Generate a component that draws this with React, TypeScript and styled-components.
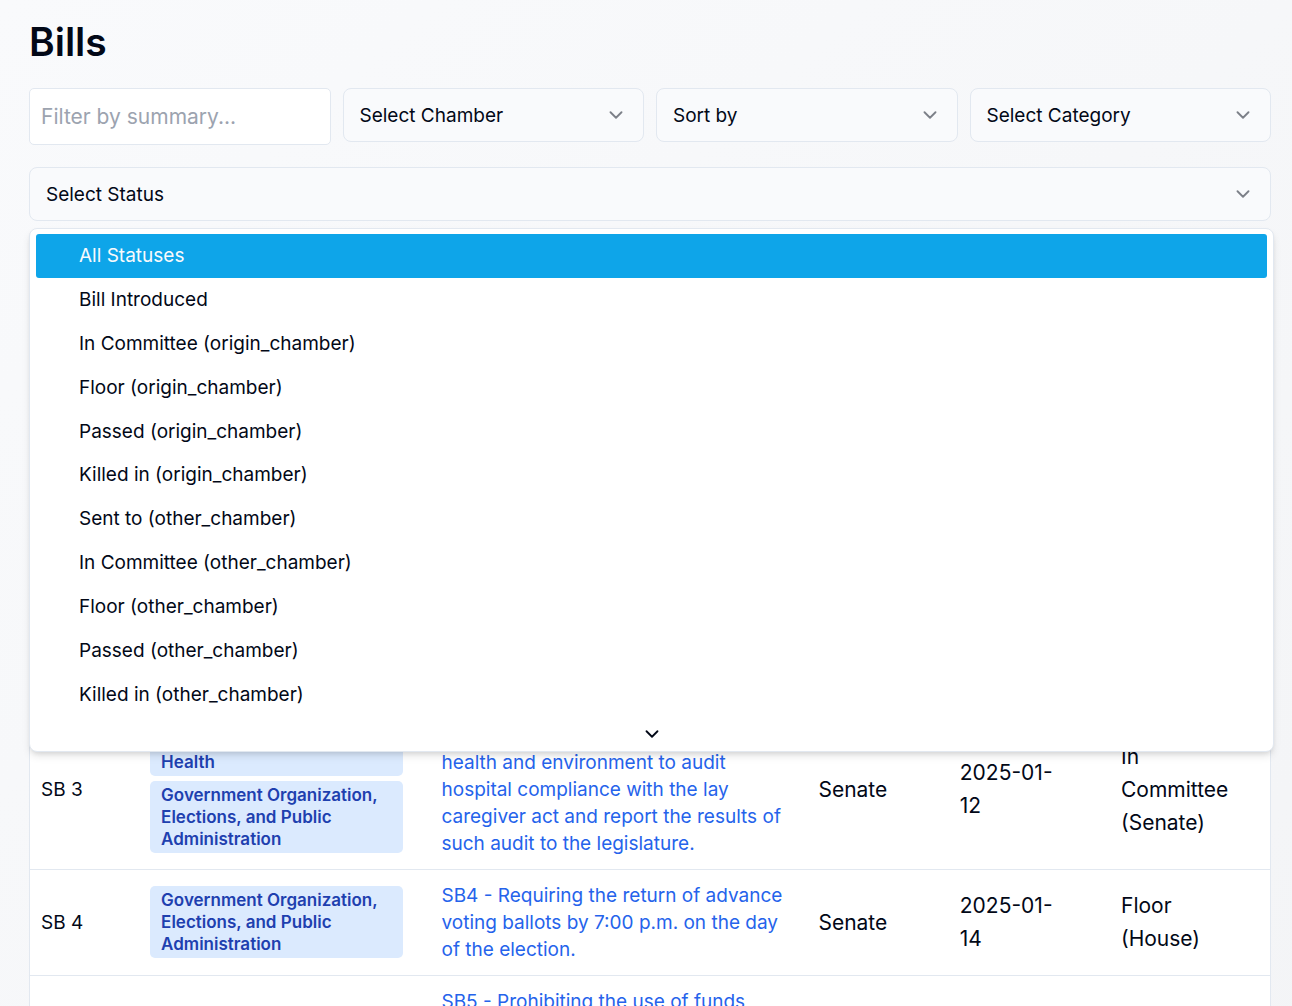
import React, { useState } from "react";
import styled, { createGlobalStyle } from "styled-components";
import { ChevronDown } from "lucide-react";

const GlobalStyle = createGlobalStyle`
  *, *::before, *::after { box-sizing: border-box; }
  html { scrollbar-width: none; }
  body {
    margin: 0;
    color: #020817;
    font-family: Inter, "Liberation Sans", sans-serif;
    font-size: 21px;
    line-height: 33px;
  }
`;

const Page = styled.main`
  min-height: 100vh;
  padding: 17px 21px 22px 29px;
  background: linear-gradient(to bottom right, #f9fafc, #f3f4f6);
`;

const Title = styled.h1`
  margin: 0 0 22px;
  font-size: 39px;
  line-height: 49px;
  font-weight: 600;
`;

const Filters = styled.section`
  display: grid;
  gap: 22px;
  margin-bottom: 22px;
`;

const FilterGrid = styled.div`
  display: grid;
  grid-template-columns: repeat(4, minmax(0, 1fr));
  align-items: start;
  gap: 12px;
`;

const SearchInput = styled.input`
  width: 100%;
  height: 57px;
  padding: 0 11px;
  border: 1px solid #e2e8f0;
  border-radius: 5px;
  background: #fff;
  color: inherit;
  font: inherit;
  outline: none;
  &::placeholder { color: #9ca3af; opacity: 1; }
`;

const Field = styled.div`
  position: relative;
  display: grid;
  align-items: center;
`;

const controlStyles = `
  width: 100%;
  height: 54px;
  padding: 0 16px;
  border: 1px solid #e2e8f0;
  border-radius: 8px;
  background: #f9fafc;
  color: #020817;
  font-family: inherit;
  font-size: 19px;
  line-height: 27px;
  text-align: left;
`;

const Select = styled.select`
  ${controlStyles}
  grid-area: 1 / 1;
  appearance: none;
`;

const SelectIcon = styled(ChevronDown)`
  grid-area: 1 / 1;
  justify-self: end;
  margin-right: 17px;
  opacity: 0.5;
  pointer-events: none;
`;

const Trigger = styled.button`
  ${controlStyles}
  display: flex;
  align-items: center;
  justify-content: space-between;
  svg { opacity: 0.5; }
`;

const Popover = styled.div`
  position: absolute;
  z-index: 10;
  top: calc(100% + 7px);
  left: 0;
  right: -3px;
  display: flex;
  flex-direction: column;
  height: 524px;
  border: 1px solid #e2e8f0;
  border-radius: 8px;
  background: #fff;
  box-shadow: 0 5px 8px -1px rgba(0, 0, 0, 0.1), 0 3px 5px -2px rgba(0, 0, 0, 0.1);
`;

const OptionList = styled.ul`
  flex: 1;
  display: grid;
  grid-auto-rows: 1fr;
  margin: 0;
  padding: 5px 6px 1px;
  list-style: none;
`;

const Option = styled.li<{ $active: boolean }>`
  display: flex;
  align-items: center;
  padding: 0 43px;
  border-radius: 3px;
  font-size: 19px;
  line-height: 27px;
  cursor: default;
  color: ${(p) => (p.$active ? "#f8fafc" : "#020817")};
  background: ${(p) => (p.$active ? "#0ea5e9" : "transparent")};
`;

const ScrollDown = styled.button`
  display: flex;
  align-items: center;
  justify-content: center;
  height: 34px;
  padding: 0;
  border: 0;
  background: none;
  color: inherit;
`;

const TableCard = styled.div`
  border: 1px solid #e2e8f0;
  background: #fff;
`;

const Table = styled.table`
  width: 100%;
  table-layout: fixed;
  border-collapse: collapse;
`;

const Col = styled.col<{ $share: number }>`
  width: ${(p) => p.$share}%;
`;

const HeadCell = styled.th`
  height: 64px;
  padding: 0 11px;
  font-size: 19px;
  font-weight: 500;
  text-align: left;
  color: #64748b;
`;

const Row = styled.tr`
  border-top: 1px solid #e2e8f0;
`;

const Cell = styled.td<{ $small?: boolean; $end?: number }>`
  padding: 12px ${(p) => p.$end ?? 28}px 12px 11px;
  vertical-align: middle;
  font-size: ${(p) => (p.$small ? 19 : 21)}px;
  line-height: ${(p) => (p.$small ? 27 : 33)}px;
`;

const Tags = styled.div`
  display: grid;
  gap: 5px;
`;

const Tag = styled.span`
  padding: 3px 11px;
  border-radius: 5px;
  background: #dbeafe;
  color: #1e40af;
  font-size: 17px;
  line-height: 22px;
  font-weight: 600;
`;

const BillLink = styled.a`
  color: #2563eb;
  text-decoration: none;
`;

const statuses = [
  "All Statuses",
  "Bill Introduced",
  "In Committee (origin_chamber)",
  "Floor (origin_chamber)",
  "Passed (origin_chamber)",
  "Killed in (origin_chamber)",
  "Sent to (other_chamber)",
  "In Committee (other_chamber)",
  "Floor (other_chamber)",
  "Passed (other_chamber)",
  "Killed in (other_chamber)",
];

const GOVERNMENT = "Government Organization, Elections, and Public Administration";
const HEALTH = "Healthcare and Public Health";

interface Bill {
  id: string;
  tags: string[];
  summary: string;
  chamber: string;
  date: string;
  status: string;
}

const bills: Bill[] = [
  {
    id: "SB 1",
    tags: [],
    summary:
      "SB1 - Exempting the state of Kansas from daylight saving time and providing for a permanent standard time if it is adopted by congress.",
    chamber: "Senate",
    date: "2025-01-12",
    status: "In Committee (Senate)",
  },
  {
    id: "SB 2",
    tags: [],
    summary:
      "SB2 - Permitting a change of party affiliation from June 1 through August 31, authorizing local elections to be held in November of each even-numbered year, requiring the secretary of state to publish notice of each election and providing that the county officers report the results of every such election to the legislature.",
    chamber: "Senate",
    date: "2025-01-12",
    status: "In Committee (Senate)",
  },
  {
    id: "SB 3",
    tags: [HEALTH, GOVERNMENT],
    summary:
      "SB3 - Directing the department of health and environment to audit hospital compliance with the lay caregiver act and report the results of such audit to the legislature.",
    chamber: "Senate",
    date: "2025-01-12",
    status: "In Committee (Senate)",
  },
  {
    id: "SB 4",
    tags: [GOVERNMENT],
    summary:
      "SB4 - Requiring the return of advance voting ballots by 7:00 p.m. on the day of the election.",
    chamber: "Senate",
    date: "2025-01-14",
    status: "Floor (House)",
  },
  {
    id: "SB 5",
    tags: [GOVERNMENT],
    summary:
      "SB5 - Prohibiting the use of funds provided by the United States government for the conduct of elections and election-related activities unless approved by the legislature.",
    chamber: "Senate",
    date: "2025-01-14",
    status: "Floor (House)",
  },
];

function SelectField({ label, options }: { label: string; options: string[] }) {
  return (
    <Field>
      <Select aria-label={label} defaultValue="">
        <option value="">{label}</option>
        {options.map((o) => (
          <option key={o}>{o}</option>
        ))}
      </Select>
      <SelectIcon size={22} aria-hidden />
    </Field>
  );
}

export default function App() {
  const [open, setOpen] = useState(true);
  const [active, setActive] = useState(0);

  return (
    <>
      <GlobalStyle />
      <Page>
        <Title>Bills</Title>
        <Filters>
          <FilterGrid>
            <SearchInput type="text" aria-label="Filter by summary" placeholder="Filter by summary..." />
            <SelectField label="Select Chamber" options={["Senate", "House"]} />
            <SelectField label="Sort by" options={["Date", "Number"]} />
            <SelectField label="Select Category" options={["Health", "Elections"]} />
          </FilterGrid>
          <Field>
            <Trigger
              type="button"
              role="combobox"
              aria-expanded={open}
              aria-controls="status-list"
              aria-label="Select Status"
              onClick={() => setOpen(!open)}
            >
              Select Status
              <ChevronDown size={22} aria-hidden />
            </Trigger>
            {open && (
              <Popover>
                <OptionList id="status-list" role="listbox" aria-label="Status">
                  {statuses.map((s, i) => (
                    <Option
                      key={s}
                      role="option"
                      aria-selected={i === active}
                      $active={i === active}
                      onMouseEnter={() => setActive(i)}
                      onClick={() => setOpen(false)}
                    >
                      {s}
                    </Option>
                  ))}
                </OptionList>
                <ScrollDown type="button" aria-label="Scroll down">
                  <ChevronDown size={22} aria-hidden />
                </ScrollDown>
              </Popover>
            )}
          </Field>
        </Filters>
        <TableCard>
          <Table>
            <colgroup>
              <Col $share={8.8} />
              <Col $share={23.5} />
              <Col $share={30.4} />
              <Col $share={11.4} />
              <Col $share={13} />
              <Col $share={12.9} />
            </colgroup>
            <thead>
              <tr>
                <HeadCell>Bill</HeadCell>
                <HeadCell>Category</HeadCell>
                <HeadCell>Summary</HeadCell>
                <HeadCell>Chamber</HeadCell>
                <HeadCell>Date</HeadCell>
                <HeadCell>Status</HeadCell>
              </tr>
            </thead>
            <tbody>
              {bills.map((b) => (
                <Row key={b.id}>
                  <Cell $small>{b.id}</Cell>
                  <Cell>
                    <Tags>
                      {b.tags.map((t) => (
                        <Tag key={t}>{t}</Tag>
                      ))}
                    </Tags>
                  </Cell>
                  <Cell $small $end={20}>
                    <BillLink href="#">{b.summary}</BillLink>
                  </Cell>
                  <Cell>{b.chamber}</Cell>
                  <Cell $end={50}>{b.date}</Cell>
                  <Cell>{b.status}</Cell>
                </Row>
              ))}
            </tbody>
          </Table>
        </TableCard>
      </Page>
    </>
  );
}
